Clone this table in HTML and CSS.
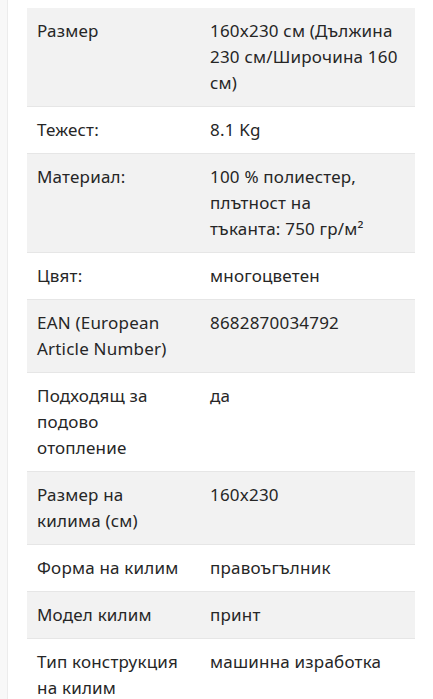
FILE: index.html
```html
<!DOCTYPE html>
<html lang="bg">
<head>
<meta charset="utf-8">
<link rel="stylesheet" href="styles.css">
</head>
<body>
<div class="page">
  <div class="rail"></div>
  <div class="content">
    <table class="specs">
      <colgroup><col class="c-key"><col class="c-val"></colgroup>
      <tbody>
        <tr class="odd"><td>Размер</td><td>160x230 см (Дължина 230 см/Широчина 160 см)</td></tr>
        <tr><td>Тежест:</td><td>8.1 Kg</td></tr>
        <tr class="odd"><td>Материал:</td><td>100 % полиестер, плътност на тъканта:&nbsp;750&nbsp;гр/м²</td></tr>
        <tr><td>Цвят:</td><td>многоцветен</td></tr>
        <tr class="odd"><td>EAN (European Article Number)</td><td>8682870034792</td></tr>
        <tr><td>Подходящ за подово отопление</td><td>да</td></tr>
        <tr class="odd"><td>Размер на килима (см)</td><td>160x230</td></tr>
        <tr><td>Форма на килим</td><td>правоъгълник</td></tr>
        <tr class="odd"><td>Модел килим</td><td>принт</td></tr>
        <tr><td>Тип конструкция на килим</td><td>машинна изработка</td></tr>
      </tbody>
    </table>
  </div>
</div>
</body>
</html>
```
FILE: styles.css
```css
html, body {
  margin: 0;
  padding: 0;
  background: #ffffff;
}
body {
  font-family: "Noto Sans", "DejaVu Sans", sans-serif;
  font-size: 17px;
  line-height: 26px;
  letter-spacing: 0.2px;
  color: #262626;
}
.page {
  display: flex;
  min-height: 699px;
}
.rail {
  width: 7px;
  flex: none;
  background: #f8f8f8;
  border-right: 1px solid #ececec;
}
.content {
  flex: 1;
  padding: 8px 18px 0 19px;
}
.specs {
  width: 388px;
  table-layout: fixed;
  border-collapse: collapse;
}
.c-key { width: 173px; }
.c-val { width: 215px; }
.specs td {
  vertical-align: top;
  padding: 10px;
  border-bottom: 1px solid #e6e6e6;
}
.specs td:first-child {
  padding-right: 20px;
}
.specs tr.odd td {
  background: #f2f2f2;
}
```
